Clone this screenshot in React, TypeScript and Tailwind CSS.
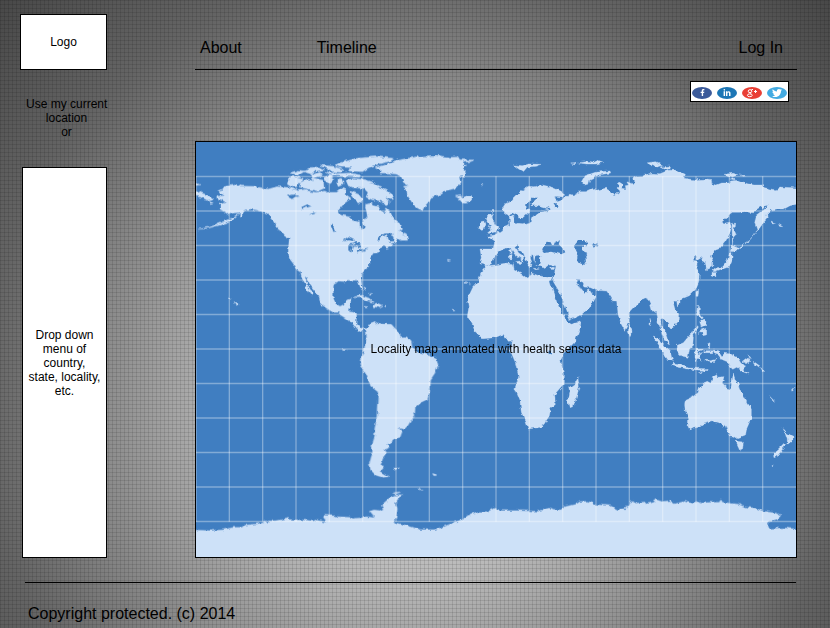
import React from "react";
import { FaFacebookF, FaLinkedinIn, FaTwitter } from "react-icons/fa";

const meridians = Array.from({ length: 18 }, (_, i) => 18 + i * 100);
const parallels = Array.from({ length: 11 }, (_, i) => 124.5 + i * 103.5);

function WorldMap() {
  return (
    <svg viewBox="18 21 1800 1245" className="block w-full" role="img" aria-label="World map">
      <defs>
        {/* Breaks the straight coast segments into an irregular shoreline */}
        <filter id="coast" filterUnits="userSpaceOnUse" x="0" y="0" width="1840" height="1290" colorInterpolationFilters="sRGB">
          <feTurbulence type="fractalNoise" baseFrequency="0.07" numOctaves="2" seed="4" result="noise" />
          <feDisplacementMap in="SourceGraphic" in2="noise" scale="13" xChannelSelector="R" yChannelSelector="G" />
        </filter>
      </defs>
      <rect x="18" y="21" width="1800" height="1245" fill="#407ec1" />
      <g filter="url(#coast)">
        <g fill="#cde1f8" stroke="#cde1f8" strokeWidth="1" strokeLinejoin="round">
          {/* North America */}
          <path d="M105 152L135 147L152 153L190 154L235 162L262 155L300 158L325 167L345 163L362 170L380 172L405 168L412 172L440 172L455 160L468 165L464 176L483 190L462 206L443 228L452 240L480 246L490 256L508 262L510 280L518 284L524 276L518 250L532 246L530 230L526 218L528 208L545 205L552 212L568 216L572 230L582 234L590 222L598 228L606 246L615 256L632 268L638 280L622 290L634 286L636 296L650 300L653 316L632 316L622 310L616 322L600 326L612 330L590 340L582 332L565 342L566 352L550 354L540 370L540 390L530 400L512 418L514 440L518 466L508 456L500 434L482 436L470 434L468 440L446 438L430 448L430 490L437 506L450 514L462 508L466 496L484 491L478 515L474 530L490 532L500 538L498 568L512 580L528 578L532 588L520 582L512 591L500 582L488 566L464 548L452 540L445 532L430 532L410 520L392 506L388 486L374 466L362 452L350 428L344 424L352 448L360 462L370 476L366 482L350 462L346 446L336 430L332 412L318 402L310 386L298 370L295 345L298 308L285 304L274 290L262 280L252 258L238 240L222 232L205 226L182 222L168 224L157 240L148 246L150 232L132 234L116 240L106 232L90 222L90 208L108 202L94 194L80 190L82 184L102 182L86 168L98 162Z" />
          <path d="M150 232L130 246L100 260L60 276L24 283L50 281L90 270L122 258L142 240Z" />
          <path d="M4 160L36 174L56 182L68 192L52 196L38 188L4 180ZM4 142L18 144L30 149L18 152L4 152ZM58 200L70 203L62 206ZM118 486L124 490L120 492ZM132 500L145 508L138 511Z" />
          {/* Arctic archipelago */}
          <path d="M292 148L296 128L316 124L340 130L332 142L318 152L302 154ZM332 142L352 132L372 138L366 128L400 136L402 160L384 168L356 162L328 156ZM302 114L326 106L345 108L326 120ZM340 110L360 98L388 96L402 104L376 108L366 118ZM404 128L420 120L432 132L418 146L408 140ZM432 90L470 78L500 70L560 65L610 70L596 80L562 88L536 98L518 110L478 108L484 98L450 96ZM390 90L430 94L460 104L452 112L430 110ZM406 110L440 116L478 114L512 120L508 126L462 124L425 122ZM440 134L454 130L460 146L448 152ZM468 136L492 130L522 134L548 142L570 156L590 166L611 182L604 194L586 188L598 200L594 212L570 198L546 194L528 186L534 172L520 160L490 158L474 150ZM480 168L506 178L520 196L508 204L494 194L484 182ZM360 120L390 112L398 122L370 128Z" />
          <path d="M492 488L512 480L538 490L550 502L528 496L512 488ZM548 508L562 504L576 511L566 517L550 515ZM525 514L535 516L527 519ZM582 511L590 512L588 516ZM522 456L530 461L525 466ZM540 474L545 480L538 480Z" />
          {/* Greenland and Iceland */}
          <g transform="translate(450 0)">
            <path d="M105 98L140 88L158 82L175 75L205 70L235 65L290 62L330 67L352 66L356 74L402 75L392 80L370 82L368 94L380 90L370 104L378 112L374 124L360 124L364 142L356 152L342 160L312 168L300 178L270 188L266 200L256 212L249 227L234 220L220 208L202 180L200 164L190 154L206 152L190 142L184 124L174 118L142 114L120 114L122 108Z" />
            <path d="M346 184L358 182L370 188L380 182L394 182L400 190L390 198L372 202L354 198L360 192ZM420 148L430 149L424 152Z" />
            <path d="M322 373L332 375L324 377ZM376 440L382 444L376 446ZM386 445L392 448L386 449ZM340 522L345 527L340 528Z" />
          </g>
          <g transform="translate(810 0)">
            {/* Eurasia */}
            <path d="M130 215L136 206L158 196L164 184L188 164L205 154L222 155L244 149L276 157L302 168L314 176L308 186L290 184L282 190L292 200L306 196L314 184L326 184L328 178L342 180L360 170L378 170L400 160L414 166L436 160L450 168L462 180L474 172L482 176L475 162L476 140L488 148L484 160L498 162L496 152L506 150L500 140L520 146L524 142L514 134L526 126L550 122L575 115L600 116L625 106L650 106L676 118L672 130L700 134L742 132L754 134L756 146L770 150L785 144L808 144L812 138L838 136L862 146L882 150L906 150L910 158L948 164L960 156L1024 160L1024 206L1008 208L990 212L972 222L950 222L932 226L920 240L922 250L910 264L892 288L884 264L888 244L906 230L926 210L916 212L908 222L904 214L888 224L878 233L856 230L836 232L820 232L804 244L785 262L796 264L810 262L814 280L808 298L796 320L780 340L766 346L750 360L758 376L758 396L740 404L736 384L724 378L728 366L714 374L708 362L696 374L714 380L708 396L718 420L716 440L706 464L688 482L664 492L650 496L640 504L644 520L656 536L654 560L635 582L622 566L610 550L602 552L604 574L618 590L624 608L628 630L618 620L606 600L602 576L594 560L590 528L578 532L572 510L562 488L540 494L526 514L510 532L508 560L494 586L484 568L474 538L470 498L460 498L450 482L440 468L408 466L392 458L372 456L360 436L350 436L362 462L374 476L388 464L394 474L408 486L392 515L360 542L330 555L322 530L312 504L298 470L280 440L282 424L288 392L272 390L250 398L230 392L222 378L220 362L240 358L218 362L208 370L216 390L208 398L200 376L190 354L174 342L174 328L164 334L176 354L196 366L190 370L190 382L182 372L164 358L150 336L130 342L116 350L100 374L94 386L80 392L60 386L64 366L60 342L100 342L104 320L82 304L104 300L124 286L132 276L150 270L148 248L162 240L162 262L190 266L210 262L218 240L242 228L262 222L230 212L212 212L208 230L188 248L180 252L168 232L146 242L134 236Z" />
            {/* Africa */}
            <path d="M80 392L105 390L140 384L160 386L162 402L184 414L204 430L214 414L236 422L262 427L278 424L270 440L278 466L290 500L304 532L318 556L330 568L363 560L360 580L345 620L315 652L302 675L310 715L310 748L284 778L286 808L272 822L268 842L252 868L240 877L205 882L198 860L184 832L180 798L165 760L176 725L166 682L150 645L155 615L142 616L130 598L104 608L68 611L44 588L38 570L22 544L26 520L22 492L38 458L56 438L62 414Z" />
            <path d="M354 728L358 756L346 798L340 816L328 818L322 794L328 768L326 758L346 744Z" />
            {/* British Isles */}
            <path d="M86 238L98 236L92 248L100 256L106 270L117 278L112 290L94 294L80 296L92 286L88 278L92 268L82 262L76 248ZM60 262L74 258L78 268L72 282L56 284ZM94 230L102 222L100 230Z" />
            <path d="M149 344L154 342L155 354L150 356ZM148 360L156 358L156 374L149 374ZM166 380L185 378L184 386L170 384ZM220 400L238 402L226 404ZM272 400L284 396L276 405Z" />
            {/* Arctic islands */}
            <path d="M160 90L190 92L206 87L243 88L226 94L202 96L190 110L176 102ZM332 84L350 82L345 87ZM356 84L378 80L398 84L414 76L431 82L408 87L380 87ZM364 144L376 122L406 112L450 108L452 114L416 120L390 132L386 148L372 150ZM562 84L586 80L608 90L592 96ZM600 96L632 93L630 102L610 102ZM792 118L820 115L834 120L818 125ZM840 120L862 122L850 124ZM808 132L818 128L826 134Z" />
            {/* Japan, Sakhalin and Kurils */}
            <path d="M816 266L824 264L822 284L829 300L820 310L817 330ZM814 330L836 340L822 350L812 346ZM816 352L816 378L808 396L780 406L764 412L758 408L770 398L788 396L802 378L808 356ZM756 412L766 414L764 426L756 422ZM836 336L870 314L890 290L866 318L840 338ZM650 498L660 494L660 508L652 512ZM708 470L716 466L714 484L708 484Z" />
            <path d="M508 568L517 590L510 602L505 590ZM712 516L718 514L718 532L730 546L724 550L710 540ZM722 556L736 552L740 570L726 576ZM728 590L740 580L738 600L728 602ZM694 598L710 572L712 576L698 602ZM936 258L948 264L938 263ZM956 268L968 275L958 274Z" />
          </g>
          {/* South America */}
          <g transform="translate(450 525)">
            <path d="M78 56L90 40L106 34L104 44L114 38L126 42L154 43L162 52L176 66L182 80L200 80L214 96L216 112L234 126L262 134L290 148L294 166L284 190L272 208L270 240L262 268L240 278L226 290L224 312L204 346L192 358L176 354L186 366L180 382L156 388L156 400L142 402L146 414L134 418L140 430L128 446L122 464L130 478L122 486L146 500L128 502L108 496L92 480L88 462L94 440L98 430L96 406L104 380L104 356L110 330L114 246L92 228L80 196L64 170L60 148L70 132L76 100L80 82Z" />
            <path d="M160 474L178 474L168 480ZM278 490L290 495L282 495ZM8 118L18 120L9 122Z" />
          </g>
          {/* Indonesia, Australia and New Zealand */}
          <g transform="translate(1290 525)">
            <path d="M100 78L114 84L134 110L152 126L158 154L144 150L128 126L114 104ZM156 162L180 164L206 174L260 176L268 182L232 180L196 176L160 168ZM172 106L190 98L214 70L220 82L218 108L208 118L204 142L180 136L172 122ZM224 126L230 118L250 118L234 124L232 132L246 128L238 140L244 154L234 144L230 156L226 144ZM246 60L258 56L260 74L250 74L244 68L232 70ZM262 102L270 98L268 118ZM234 190L260 176L248 186ZM280 120L296 122L306 138L314 130L332 132L352 142L362 158L372 168L374 182L388 192L370 186L350 172L338 178L326 166L324 156L304 148L296 136L284 132ZM368 156L384 144L390 146L388 156L376 162ZM384 132L394 146L388 142ZM400 154L420 168L418 172L402 160ZM422 172L434 188L426 184ZM446 256L464 274L458 270ZM514 238L520 240L516 244ZM522 234L528 230L526 236ZM248 122L280 122L278 128L250 128ZM254 150L272 152L288 148L280 158L260 155Z" />
            <path d="M196 270L218 260L234 248L240 232L252 218L262 214L272 220L278 202L290 194L292 202L312 200L306 222L320 234L332 238L340 192L346 210L354 220L358 240L370 256L382 280L394 294L394 324L380 356L376 378L354 386L342 378L328 378L322 362L316 344L308 352L304 340L282 334L250 342L238 352L218 354L208 360L204 352L206 326L196 302L194 286ZM348 394L370 396L368 416L360 420ZM490 356L502 370L520 380L510 398L500 402L502 390L496 372ZM492 400L498 406L486 420L476 434L462 440L460 430L478 414ZM456 466L460 468L457 470ZM90 22L94 40L90 48ZM104 84L108 94L102 90Z" />
          </g>
          {/* Antarctica */}
          <g transform="translate(0 1005)">
            <path d="M2 180L60 182L98 180L130 172L156 172L162 166L215 160L224 154L262 152L294 145L302 149L352 151L372 154L376 150L410 158L408 146L400 143L404 136L436 138L438 140L480 142L485 146L514 144L530 140L554 144L538 124L552 120L570 122L580 116L574 106L596 86L626 74L638 75L618 90L616 100L622 116L618 144L610 156L654 168L692 179L736 179L782 162L822 146L834 136L866 128L888 128L914 114L918 122L982 122L1044 124L1082 114L1090 118L1112 120L1126 110L1160 102L1170 95L1194 94L1218 104L1262 108L1284 120L1306 116L1326 94L1338 100L1362 96L1370 102L1392 97L1396 88L1416 95L1440 92L1454 102L1484 94L1510 102L1522 94L1532 100L1560 97L1588 97L1592 90L1598 97L1646 103L1668 112L1694 114L1722 124L1762 130L1772 136L1764 146L1736 156L1731 170L1738 176L1780 174L1836 179L1836 282L2 282Z" />
            <path d="M610 68L632 66L618 72ZM686 57L696 58L688 60ZM728 12L740 16L732 17Z" />
          </g>
        </g>
        {/* Inland seas and lakes */}
        <g fill="#407ec1">
          <path d="M290 183L312 178L330 184L314 186L306 192ZM334 216L352 208L366 213L346 218L338 222ZM354 236L370 230L380 232L366 235ZM422 268L428 266L436 290L430 290ZM456 318L476 304L492 312L496 320L476 316ZM478 328L492 326L500 318L514 332L506 340L498 332L488 332L484 352L478 350ZM500 350L516 342L536 338L526 344L504 354ZM564 308L580 296L612 294L602 300L614 306L612 318L598 320L592 302L578 303L562 318ZM516 160L526 164L524 205L518 210Z" />
          <g transform="translate(810 0)">
            <path d="M196 218L196 208L214 196L220 188L234 188L228 196L212 208L214 218L208 222ZM208 236L230 228L262 224L264 228L240 232L228 240L216 246L210 244ZM258 218L266 214L272 220L264 224ZM280 206L290 208L294 216L286 216ZM160 245L172 254L188 246L192 262L166 266Z" />
            <path d="M248 340L260 320L272 322L276 330L286 330L282 324L300 316L296 328L312 344L316 352L304 358L276 350L256 354L246 348ZM342 332L354 318L370 318L382 324L380 334L366 332L366 344L374 354L382 356L376 364L378 384L368 388L352 382L356 362L348 346ZM398 326L412 320L412 332L404 338Z" />
            <path d="M226 362L244 360L240 370L242 384L236 392L222 386ZM266 650L276 644L276 658L266 658Z" />
          </g>
        </g>
      </g>
      <g stroke="#ffffff" strokeOpacity="0.35" strokeWidth="4">
        {meridians.map((x) => (
          <line key={x} x1={x} x2={x} y1="124" y2="1160" />
        ))}
        {parallels.map((y) => (
          <line key={y} x1="18" x2="1818" y1={y} y2={y} />
        ))}
      </g>
    </svg>
  );
}

const badge = "flex h-3 w-5 items-center justify-center rounded-[50%] text-white";

export default function App() {
  return (
    <div className="flex min-h-screen flex-col bg-[linear-gradient(rgba(0,0,0,0.1)_1px,transparent_1px),linear-gradient(90deg,rgba(0,0,0,0.1)_1px,transparent_1px),radial-gradient(circle_at_50%_64%,#d4d4d4_0%,#bababa_30%,#646464_75%,#484848_100%)] bg-[size:4px_4px,4px_4px,100%_100%] pt-3.5 font-['Liberation_Sans',Arial,sans-serif] text-xs leading-3.5 text-black">
      <div className="flex pr-[33px] pl-5">
        <aside className="flex w-[87px] flex-col">
          <a href="#home" className="flex h-14 items-center justify-center border border-black bg-white">
            Logo
          </a>
          <div className="mt-[27px] ml-1.5 text-center">
            <button type="button" className="block w-full whitespace-nowrap">
              Use my current
              <br />
              location
            </button>
            <p>or</p>
          </div>
          <button
            type="button"
            aria-haspopup="listbox"
            className="mt-7 ml-0.5 flex-1 border border-black bg-white"
          >
            Drop down
            <br />
            menu of
            <br />
            country,
            <br />
            state, locality,
            <br />
            etc.
          </button>
        </aside>
        <main className="ml-[88px] min-w-0 flex-1">
          <nav className="flex h-14 items-end border-b border-black pr-3.5 pb-[11px] pl-[5px] text-base leading-5">
            <a href="#about">About</a>
            <a href="#timeline" className="ml-[75px]">Timeline</a>
            <a href="#login" className="ml-auto">Log In</a>
          </nav>
          <div className="mt-[11px] mr-2 ml-auto flex h-[21px] w-[99px] items-center justify-between border border-black bg-white px-px pt-0.5">
            <a href="#facebook" aria-label="Facebook" className={`${badge} bg-[#3b5a9a]`}>
              <FaFacebookF size={7} />
            </a>
            <a href="#linkedin" aria-label="LinkedIn" className={`${badge} bg-[#1c76b5]`}>
              <FaLinkedinIn size={8} />
            </a>
            <a href="#google-plus" aria-label="Google Plus" className={`${badge} bg-[#e93f35]`}>
              <svg viewBox="0 0 20 12" className="h-3 w-5" fill="none" stroke="#fff" strokeWidth="1">
                <ellipse cx="8" cy="4.2" rx="1.8" ry="1.5" />
                <path d="M9.5 2.5H11M8 5.7L9 6.8" />
                <ellipse cx="7.8" cy="8.3" rx="2.4" ry="1.4" />
                <path d="M12 4.5H15M13.5 3V6" />
              </svg>
            </a>
            <a href="#twitter" aria-label="Twitter" className={`${badge} bg-[#43abe2]`}>
              <FaTwitter size={10} />
            </a>
          </div>
          <section className="relative mt-[39px] border border-black">
            <WorldMap />
            <p className="absolute inset-0 flex items-center justify-center pb-0.5">
              Locality map annotated with health sensor data
            </p>
          </section>
        </main>
      </div>
      <footer className="mt-6 mr-[34px] ml-[25px] border-t border-black pt-[21px] pb-1 pl-[3px] text-base leading-5">
        Copyright protected. (c) 2014
      </footer>
    </div>
  );
}
